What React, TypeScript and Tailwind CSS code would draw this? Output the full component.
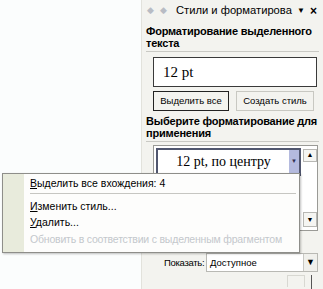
import React from "react"

const font = { fontFamily: '"Liberation Sans", Arial, sans-serif' }
const serif = { fontFamily: '"Liberation Serif", "Times New Roman", serif' }

const App = () => {
  return (
    <main
      className="relative flex w-[323px] h-[289px] overflow-hidden bg-[#fbfdfd] text-black"
      style={font}
    >
      {/* Empty document area */}
      <div className="w-[141px] shrink-0" />

      {/* Task pane */}
      <section className="flex flex-col flex-1 bg-[#f3f3ef] border-l border-[#e2e2dc]">
        {/* Header */}
        <div className="flex items-center h-[22px] pl-[5px] pr-[6px]">
          <span className="text-[9px] text-[#b8bcc4]">◆</span>
          <span className="text-[9px] text-[#b8bcc4] ml-[6px]">◆</span>
          <span className="ml-[9px] whitespace-nowrap text-[11.2px]">Стили и форматирова</span>
          <span className="ml-auto text-[8px]">▼</span>
          <span className="ml-[5px] text-[12px] font-bold leading-none">×</span>
        </div>

        {/* Formatting of selected text */}
        <div className="mx-[4px] mt-[4px] pb-[2px] border-b border-[#c9c9c4] text-[11px] font-bold leading-[12px] whitespace-nowrap tracking-[-0.2px]">
          Форматирование выделенного
          <br />
          текста
        </div>
        <div
          className="ml-[11px] mr-[6px] mt-[5px] h-[30px] flex items-center pl-[9px] bg-white border border-[#3a3a3a] text-[15px]"
          style={serif}
        >
          12 pt
        </div>
        <div className="flex ml-[11px] mt-[4px] gap-[7px] text-[9.5px]">
          <button className="w-[76px] h-[20px] border border-[#222] bg-[#f3f3ef]">
            Выделить все
          </button>
          <button className="w-[78px] h-[20px] border border-[#c8c8c2] bg-[#f3f3ef]">
            Создать стиль
          </button>
        </div>

        {/* Choose formatting */}
        <div className="mx-[4px] mt-[4px] pb-[2px] border-b border-[#c9c9c4] text-[11px] font-bold leading-[12px] whitespace-nowrap tracking-[-0.2px]">
          Выберите форматирование для
          <br />
          применения
        </div>
        <div className="flex ml-[11px] mr-[5px] mt-[3px] h-[89px] bg-white border border-[#9a9a96]">
          <div className="flex-1 pt-[2px] pl-[2px]">
            <div className="flex h-[28px] border-2 border-[#50566e]">
              <div
                className="flex-1 flex items-center justify-center text-[14px] whitespace-nowrap"
                style={serif}
              >
                12 pt, по центру
              </div>
              <div className="w-[10px] bg-[#b4bade] flex items-center justify-center text-[6px] text-[#303050]">
                ▼
              </div>
            </div>
          </div>
          {/* Scrollbar */}
          <div className="w-[16px] flex flex-col justify-between py-[3px] pl-[2px]">
            <div className="h-[13px] border border-[#b8b8b4] bg-[#f5f5f2] flex items-center justify-center text-[7px]">
              ▲
            </div>
            <div className="h-[15px] border border-[#b8b8b4] bg-[#f5f5f2] flex items-center justify-center text-[7px]">
              ▼
            </div>
          </div>
        </div>

        {/* Show */}
        <div className="flex items-center mt-[22px] h-[19px] pl-[22px] pr-[5px] text-[9.5px]">
          <span className="w-[42px] whitespace-nowrap tracking-[-0.3px]">Показать:</span>
          <div className="flex flex-1 h-full bg-white border border-[#b9b9b4]">
            <span className="flex-1 flex items-center pl-[3px]">Доступное</span>
            <div className="w-[14px] bg-[#f0f0ec] border-l border-[#c8c8c4] flex items-center justify-center text-[9px]">
              ▼
            </div>
          </div>
        </div>
        <div className="flex justify-end mr-[11px] mt-[3px] gap-[6px]">
          <div className="w-[18px] h-[12px] border border-[#d8d8d2] border-b-0" />
          <div className="w-px h-[14px] bg-[#555]" />
        </div>
      </section>

      {/* Context menu */}
      <div className="absolute left-[2px] top-[173px] w-[298px] h-[80px] flex bg-[#fdfdfc] border border-[#8e8e8a] shadow-[1px_1px_2px_rgba(0,0,0,0.25)] text-[10.5px]">
        <div className="w-[21px] shrink-0 bg-[#e8ebdc]" />
        <div className="flex-1 flex flex-col pl-[6px] pr-[3px]">
          <div className="h-[19px] flex items-center pt-[1px]">
            <span>
              <span className="underline">В</span>ыделить все вхождения: 4
            </span>
          </div>
          <div className="h-px bg-[#c6c6c2]" />
          <div className="h-[19px] flex items-center pt-[6px]">
            <span>
              <span className="underline">И</span>зменить стиль...
            </span>
          </div>
          <div className="h-[18px] flex items-center pt-[2px]">
            <span>
              <span className="underline">У</span>далить...
            </span>
          </div>
          <div className="h-[18px] flex items-center text-[#c4c8cc] whitespace-nowrap tracking-[-0.2px]">
            Обновить в соответствии с выделенным фрагментом
          </div>
        </div>
      </div>
    </main>
  )
}

export default App
